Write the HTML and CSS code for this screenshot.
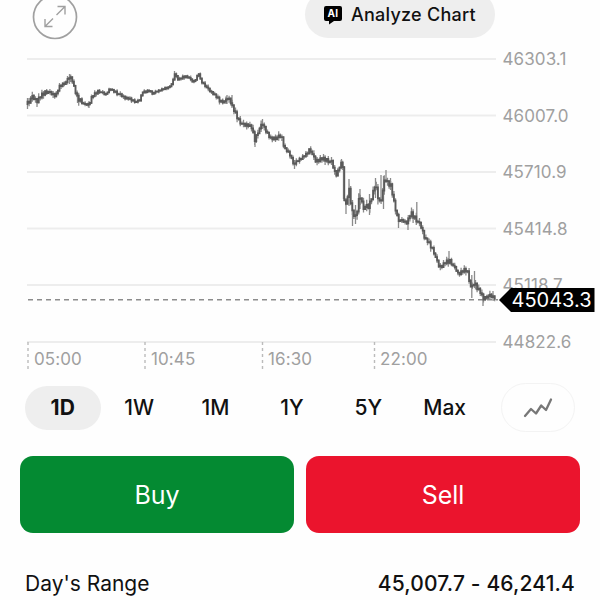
FILE: index.html
```html
<!DOCTYPE html>
<html lang="en">
<head>
    <meta charset="UTF-8">
    <meta name="viewport" content="width=device-width, initial-scale=1.0">
    <title>Chart</title>
    <link rel="stylesheet" href="styles.css">
</head>
<body>
    <div class="toolbar">
        <button class="expand" aria-label="Expand">
            <svg width="46" height="46" viewBox="0 0 46 46" fill="none" stroke="#a0a0a0" stroke-width="1.4">
                <circle cx="23" cy="23" r="21.5" stroke-width="1.7"/>
                <path d="M24.5 21L33 12.5M25.5 12.5H33V20.5M21 24.5L13 32.5M13 25V32.5H20.5"/>
            </svg>
        </button>
        <button class="analyze">
            <svg width="20" height="20" viewBox="0 0 20 20">
                <path d="M3 1H17Q19 1 19 3V14Q19 16 17 16H11L6 19.5V16H3Q1 16 1 14V3Q1 1 3 1Z"/>
                <text class="ai" x="10" y="12.2" text-anchor="middle">AI</text>
            </svg>
            <span>Analyze Chart</span>
        </button>
    </div>

    <svg class="chart" width="600" height="330" viewBox="0 45 600 330">
        <path class="grid" d="M27 59H496M27 115.5H496M27 172H496M27 228.5H496M27 285H496M27 342H496"/>
        <path class="ticks" d="M28 342V370M145 342V370M262.5 342V370M374.5 342V370"/>
        <g class="axis">
            <text x="502.5" y="65">46303.1</text>
            <text x="502.5" y="121.5">46007.0</text>
            <text x="502.5" y="178">45710.9</text>
            <text x="502.5" y="234.5">45414.8</text>
            <text x="502.5" y="291">45118.7</text>
            <text x="502.5" y="348">44822.6</text>
            <text x="34" y="364.5">05:00</text>
            <text x="151" y="364.5">10:45</text>
            <text x="268" y="364.5">16:30</text>
            <text x="380" y="364.5">22:00</text>
        </g>
        <path class="current" d="M28 299.8H498"/>
        <path id="wicks" class="wicks"/>
        <path id="bodies" class="bodies"/>
        <path d="M499 300L511 288H594.5V312H511Z"/>
        <text class="price" x="511.5" y="306.8">45043.3</text>
    </svg>

    <div class="periods">
        <button class="period active">1D</button>
        <button class="period">1W</button>
        <button class="period">1M</button>
        <button class="period">1Y</button>
        <button class="period">5Y</button>
        <button class="period">Max</button>
        <button class="chart-type" aria-label="Chart type">
            <svg width="30" height="22" viewBox="0 0 30 22" fill="none" stroke="#777" stroke-width="2.3" stroke-linejoin="round" stroke-linecap="round">
                <path d="M2 19L8 12L13 16.5L18.2 8.5L23 13L28 2.5"/>
            </svg>
        </button>
    </div>

    <div class="actions">
        <button class="buy">Buy</button>
        <button class="sell">Sell</button>
    </div>

    <div class="row">
        <span>Day's Range</span>
        <span class="value">45,007.7 - 46,241.4</span>
    </div>

    <script>
        // x, y and how far the candles spread at that point
        const points = [
            [27,104,4],[31.7,97,3],[36.7,100,4],[40,97.5,3],[45,92,2],[48.5,92,2],[51.7,94,3],[56,94.5,2],[60,86,2],
            [66,82,2],[70,76.5,3],[72.5,80,2],[75,91.5,2],[77.5,98,4],[81.6,102,1.5],[85,105,1.5],[89,104,2],
            [91.7,97,2],[98.5,91,1.5],[105.5,94.5,1],[109.5,89,1],[115,92,2],[120,95,2],[126.5,98,1.5],[136.5,102,1],
            [139.5,100,1],[142.5,91.5,1.5],[146,92,1],[149,90.5,1],[152.5,93.5,1],[160,90,1],[168.5,87.5,1],[172.5,83,1],
            [174.5,73.5,1.5],[178.5,79.5,1.5],[185,76.5,1],[188.5,77,1.5],[191.7,81.5,1],[194.5,81,1],[198.5,73.5,1],
            [201,81.5,1],[205,85,2],[208.5,90,1.5],[213.5,93.5,2],[220,101.5,2],[225,101.5,2],[227.5,98.5,3],[230,99,3],
            [233.5,110,3],[238.5,120,3],[243.5,125.5,3],[248.5,124,3],[251.5,128,3],[255,141,4],[258,131,3],[262.5,124,3],
            [266.5,131,2],[270,139,2],[275,138,3],[281.5,136,3],[284.5,148,2],[290,155,2],[294,164.5,2],[300,158.5,2],
            [306,155,2],[310,148.5,3],[315,161,3],[320,159,3],[326.5,160,3],[331.5,162.5,3],[336,175,2],[341.5,163,2],
            [343.3,168,2],[344.3,201,2],[346,203,4],[349.3,190,6],[351.7,210,4],[356,217,5],[360,195,5],[362.7,207,4],
            [368.3,207,4],[371.7,196,4],[375,186,5],[380,204,4],[385,179,4],[390.7,185,3],[393.3,200,3],[398,220,2],
            [407,222,3],[410.7,214,4],[416.7,220,3],[421.7,228,3],[425,238,3],[433,250,2],[439,267,3],[445,263,3],
            [450,261,2],[458,273,3],[467,270,3],[471,288,2],[475,283,4],[480,292,3],[483,299,2],[488,296,3],[496,297,3]
        ];

        // the longer wicks: x, high, low
        const spikes = [
            [27.5,98,109],[37,98,107],[69.5,74,84],[77.5,94,103],[89,101,108],[174.5,71,80],[227,95,104],[232,95,108],
            [255,132,147],[262.5,119,129],[294.5,160,169],[341.5,159,166],[343.5,166,199],[346,198,214],[349,179,206],
            [352.5,200,226],[355.5,205,224],[360,189,209],[369.5,194,215],[375.5,178,198],[381,175,203],[383.5,176,209],
            [386,170,183],[390.5,178,190],[398.5,213,228],[408,217,230],[416.8,202,224],[449,251,264],[471.8,275,298],
            [474.5,271,288],[483,296,306],[493,291,300]
        ];

        const seeds = [0.2, 0.9, 0.5, 0.1, 0.7, 0.4, 1, 0.3, 0.6, 0, 0.8];
        let wicks = '';
        let bodies = '';
        let i = 0;
        let n = 0;
        let last = points[0][1];
        for (let x = 27.5; x < 496; x += 1.6) {
            while (x > points[i + 1][0]) i++;
            const a = points[i];
            const b = points[i + 1];
            const t = (x - a[0]) / (b[0] - a[0]);
            const jitter = (seeds[n % 11] - 0.5) * a[2] * 1.3;
            const y = a[1] + (b[1] - a[1]) * t + jitter;
            const top = Math.min(last, y);
            const bottom = Math.max(last, y);
            const spread = a[2] * 1.1;
            wicks += `M${x} ${top - spread * seeds[(n + 3) % 11] - 0.7}V${bottom + spread * seeds[(n + 7) % 11] + 0.7}`;
            bodies += `M${x} ${top - 0.9}V${bottom + 0.9}`;
            last = y;
            n++;
        }
        spikes.forEach(s => {
            wicks += `M${s[0]} ${s[1]}V${s[2]}`;
        });
        document.getElementById('wicks').setAttribute('d', wicks);
        document.getElementById('bodies').setAttribute('d', bodies);
    </script>
</body>
</html>
```
FILE: styles.css
```css
* {
    box-sizing: border-box;
}
body {
    font-family: Inter, sans-serif;
    background: #fefefe;
    color: #111;
    width: 600px;
    height: 600px;
    margin: 0;
    overflow: hidden;
}
button {
    font-family: inherit;
    border: none;
    padding: 0;
    background: none;
    color: #111;
    cursor: pointer;
}
.toolbar {
    display: flex;
    justify-content: space-between;
    align-items: flex-end;
    height: 45px;
    padding: 0 105px 5px 32px;
}
.expand {
    height: 46px;
}
.expand svg {
    display: block;
}
.analyze {
    display: flex;
    align-items: center;
    gap: 8px;
    height: 47px;
    width: 190px;
    padding: 0 0 0 18px;
    margin-bottom: 2px;
    border-radius: 24px;
    background: #eee;
    font-size: 18px;
    font-weight: 500;
    letter-spacing: 0.25px;
}
.ai {
    fill: #fff;
    font-size: 10px;
    font-weight: 700;
}
.chart {
    display: block;
}
.grid {
    stroke: #ededed;
    stroke-width: 1.8;
}
.ticks {
    stroke: #bbb;
    stroke-width: 1.4;
    stroke-dasharray: 3 3;
}
.axis {
    fill: #a0a0a0;
    font-size: 17px;
    letter-spacing: 0.1px;
}
.current {
    stroke: #8c8c8c;
    stroke-width: 1.5;
    stroke-dasharray: 5 4;
}
.wicks {
    stroke: #8a8a8a;
    stroke-width: 1.3;
}
.bodies {
    stroke: #5a5a5a;
    stroke-width: 1.8;
}
.price {
    fill: #fff;
    font-size: 20px;
}
.periods {
    display: flex;
    align-items: center;
    height: 65px;
    padding-left: 25px;
}
.period {
    width: 76.4px;
    height: 44px;
    border-radius: 22px;
    padding-right: 1px;
    font-size: 21px;
    font-weight: 500;
}
.period.active {
    background: #eee;
    font-weight: 700;
}
.chart-type {
    display: flex;
    align-items: center;
    justify-content: center;
    width: 74px;
    height: 49px;
    margin-left: 18px;
    border: 1.5px solid #f3f3f3;
    border-radius: 25px;
}
.actions {
    display: flex;
    gap: 12px;
    padding: 16px 20px 0;
}
.actions button {
    flex: 1;
    height: 77px;
    border-radius: 13px;
    color: #fff;
    font-size: 25px;
}
.actions .buy {
    background: #048a32;
}
.actions .sell {
    background: #eb142d;
}
.row {
    display: flex;
    justify-content: space-between;
    padding: 38px 25px 0 25px;
    font-size: 21px;
    line-height: 26px;
}
.value {
    font-weight: 500;
    letter-spacing: 0.15px;
}
```
